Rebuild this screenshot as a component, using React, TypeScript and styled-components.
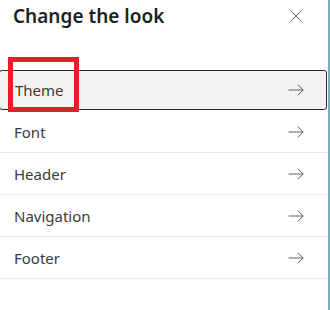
import styled, { createGlobalStyle } from "styled-components";

const GlobalStyle = createGlobalStyle`
  html, body {
    margin: 0;
    padding: 0;
    background: #ffffff;
  }
  body {
    font-family: "Noto Sans", "Open Sans", sans-serif;
  }
`;

const items = ["Theme", "Font", "Header", "Navigation", "Footer"];

const ArrowIcon = () => (
  <svg width="16" height="12" viewBox="0 0 16 12" fill="none">
    <path
      d="M0.5 6H15.2M9.8 0.6L15.2 6L9.8 11.4"
      stroke="#605e5c"
      strokeWidth="1"
    />
  </svg>
);

const CloseIcon = () => (
  <svg width="12" height="12" viewBox="0 0 12 12" fill="none">
    <path d="M0.5 0.5L11.5 11.5M11.5 0.5L0.5 11.5" stroke="#605e5c" strokeWidth="1" />
  </svg>
);

const App = () => {
  return (
    <>
      <GlobalStyle />
      <Panel>
        <Header>
          <Title>Change the look</Title>
          <CloseButton aria-label="Close">
            <CloseIcon />
          </CloseButton>
        </Header>
        <List>
          {items.map((item, index) => (
            <Row key={item} $selected={index === 0}>
              <Label>{item}</Label>
              <ArrowIcon />
            </Row>
          ))}
        </List>
        <Highlight />
      </Panel>
    </>
  );
};

export default App;

const Panel = styled.div`
  position: relative;
  width: 330px;
  height: 310px;
  box-sizing: border-box;
  border-right: 2px solid #74aebf;
  background: #ffffff;
`;

const Header = styled.div`
  display: flex;
  align-items: center;
  justify-content: space-between;
  height: 32px;
  padding: 0 26px 0 13px;
  margin-bottom: 37px;
`;

const Title = styled.div`
  font-size: 19px;
  font-weight: 600;
  color: #201f1e;
`;

const CloseButton = styled.button`
  display: flex;
  align-items: center;
  justify-content: center;
  padding: 0;
  border: none;
  background: transparent;
`;

const List = styled.div`
  display: flex;
  flex-direction: column;
`;

const Row = styled.div<{ $selected?: boolean }>`
  display: flex;
  align-items: center;
  justify-content: space-between;
  box-sizing: border-box;
  height: ${(p) => (p.$selected ? "40px" : "42px")};
  margin: ${(p) => (p.$selected ? "1px 1px 1px -1px" : "0")};
  padding-left: ${(p) => (p.$selected ? "15px" : "14px")};
  padding-right: ${(p) => (p.$selected ? "22px" : "24px")};
  border: ${(p) => (p.$selected ? "1px solid #2b2b2b" : "none")};
  border-bottom: 1px solid ${(p) => (p.$selected ? "#2b2b2b" : "#edebe9")};
  border-radius: ${(p) => (p.$selected ? "3px" : "0")};
  background: ${(p) => (p.$selected ? "#f3f2f1" : "transparent")};
`;

const Label = styled.span`
  font-size: 15px;
  color: #3b3a39;
`;

const Highlight = styled.div`
  position: absolute;
  left: 8px;
  top: 57px;
  width: 71px;
  height: 55px;
  box-sizing: border-box;
  border: 5px solid #e3202a;
  pointer-events: none;
`;
